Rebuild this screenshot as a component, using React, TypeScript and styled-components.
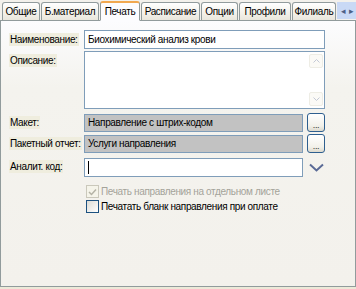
import React from 'react';
import styled, { createGlobalStyle } from 'styled-components';

const GlobalStyle = createGlobalStyle`
  body {
    margin: 0;
    font-family: 'Liberation Sans', Arial, sans-serif;
    font-size: 10px;
    letter-spacing: -0.35px;
    color: #000;
  }
`;

const Frame = styled.div`
  width: 356px;
  height: 289px;
  background: #ece9d8;
  display: flex;
  flex-direction: column;
  overflow: hidden;
`;

const TabStrip = styled.div`
  height: 20px;
  display: flex;
  align-items: flex-end;
  padding-left: 2px;
  background: #f3f1ec;
  position: relative;
  z-index: 1;
`;

const Tab = styled.div<{ $active?: boolean; $w: number }>`
  flex: none;
  width: ${({ $w }) => $w}px;
  height: ${({ $active }) => ($active ? '20px' : '18px')};
  box-sizing: border-box;
  display: flex;
  align-items: center;
  justify-content: center;
  white-space: nowrap;
  overflow: hidden;
  border: 1px solid #919b9c;
  border-bottom: ${({ $active }) => ($active ? '1px solid #fcfcfe' : 'none')};
  border-top: ${({ $active }) => ($active ? '2px solid #f1a84f' : '1px solid #919b9c')};
  border-radius: 3px 3px 0 0;
  background: ${({ $active }) =>
    $active ? '#fcfcfe' : 'linear-gradient(#ffffff, #f3f1ea 60%, #e9e6dc)'};
  margin-right: 1px;
  margin-bottom: ${({ $active }) => ($active ? '-1px' : '0')};
`;

const TabScroller = styled.div`
  margin-left: auto;
  flex: none;
  width: 20px;
  height: 17px;
  margin-bottom: 1px;
  background: #c9d9f5;
  display: flex;
  align-items: center;
  justify-content: space-evenly;
  color: #4d6185;
  font-size: 9px;
`;

const Panel = styled.div`
  flex: none;
  height: 267px;
  box-sizing: border-box;
  border: 1px solid #919b9c;
  background: linear-gradient(#fcfcfe, #f4f3ee 25%, #f3f1ec);
  padding: 9px 13px 0 8px;
`;

const Form = styled.div`
  display: grid;
  grid-template-columns: 75px 219px 22px;
  row-gap: 2px;
  align-items: center;
`;

const Label = styled.div<{ $top?: boolean }>`
  align-self: ${({ $top }) => ($top ? 'start' : 'center')};
  margin-top: ${({ $top }) => ($top ? '3px' : '0')};
  justify-self: start;
  background: #efedde;
  padding: 0 1px;
  line-height: 13px;
  white-space: nowrap;
`;

const TextBox = styled.div<{ $wide?: boolean; $gray?: boolean; $gapTop?: boolean }>`
  grid-column: ${({ $wide }) => ($wide ? '2 / 4' : '2 / 3')};
  height: ${({ $gray }) => ($gray ? '18px' : '19px')};
  margin-top: ${({ $gapTop }) => ($gapTop ? '3px' : '0')};
  box-sizing: border-box;
  border: 1px solid #7f9db9;
  background: ${({ $gray }) => ($gray ? '#c2c2c2' : '#fff')};
  padding: 0 3px;
  display: flex;
  align-items: center;
  white-space: nowrap;
  overflow: hidden;
`;

const MemoBox = styled.div`
  grid-column: 2 / 4;
  height: 58px;
  box-sizing: border-box;
  border: 1px solid #7f9db9;
  background: #fff;
  display: flex;
  justify-content: flex-end;
  margin-bottom: 2px;
`;

const ScrollBar = styled.div`
  width: 14px;
  display: flex;
  flex-direction: column;
  justify-content: space-between;
  padding: 2px 1px 2px 0;
`;

const ScrollButton = styled.div`
  height: 12px;
  border: 1px solid #eeede5;
  border-radius: 2px;
  background: #fbfaf6;
  display: flex;
  align-items: center;
  justify-content: center;
`;

const DotsButton = styled.div`
  justify-self: end;
  width: 16px;
  height: 17px;
  border: 1px solid #2e5f8f;
  border-radius: 3px;
  background: linear-gradient(#ffffff, #f2f1ea 70%, #dcd9cd);
  display: flex;
  align-items: flex-end;
  justify-content: center;
  font-size: 9px;
  line-height: 12px;
  color: #333;
`;

const Caret = styled.span`
  width: 1px;
  height: 13px;
  background: #000;
`;

const DropIcon = styled.div`
  justify-self: end;
  width: 18px;
  margin-top: 3px;
  display: flex;
  justify-content: center;
`;

const Checks = styled.div`
  display: flex;
  flex-direction: column;
  gap: 2px;
  padding: 8px 0 0 77px;
`;

const CheckRow = styled.label<{ $disabled?: boolean }>`
  display: flex;
  align-items: center;
  gap: 2px;
  color: ${({ $disabled }) => ($disabled ? '#a4a39a' : '#000')};
  white-space: nowrap;
`;

const Box = styled.span<{ $disabled?: boolean }>`
  width: 11px;
  height: 11px;
  border: 1px solid ${({ $disabled }) => ($disabled ? '#cac8bb' : '#1c5180')};
  background: ${({ $disabled }) => ($disabled ? '#f5f4ea' : 'linear-gradient(135deg, #dcdbd5, #fff)')};
  display: flex;
  align-items: center;
  justify-content: center;
`;

const Arrow = ({ up }: { up?: boolean }) => (
  <svg width="7" height="4" viewBox="0 0 7 4">
    <polyline
      points={up ? '0.5,3.5 3.5,0.5 6.5,3.5' : '0.5,0.5 3.5,3.5 6.5,0.5'}
      fill="none"
      stroke="#c3c8d6"
      strokeWidth="1"
    />
  </svg>
);

const tabs: [string, number][] = [
  ['Общие', 38],
  ['Б.материал', 58],
  ['Печать', 40],
  ['Расписание', 59],
  ['Опции', 37],
  ['Профили', 52],
  ['Филиаль', 44],
];

export default function App() {
  return (
    <>
      <GlobalStyle />
      <Frame>
        <TabStrip>
          {tabs.map(([t, w]) => (
            <Tab key={t} $w={w} $active={t === 'Печать'}>
              {t}
            </Tab>
          ))}
          <TabScroller>
            <span>◂</span>
            <span>▸</span>
          </TabScroller>
        </TabStrip>
        <Panel>
          <Form>
            <Label>Наименование:</Label>
            <TextBox $wide>Биохимический анализ крови</TextBox>

            <Label $top>Описание:</Label>
            <MemoBox>
              <ScrollBar>
                <ScrollButton>
                  <Arrow up />
                </ScrollButton>
                <ScrollButton>
                  <Arrow />
                </ScrollButton>
              </ScrollBar>
            </MemoBox>

            <Label>Макет:</Label>
            <TextBox $gray>Направление с штрих-кодом</TextBox>
            <DotsButton>...</DotsButton>

            <Label>Пакетный отчет:</Label>
            <TextBox $gray>Услуги направления</TextBox>
            <DotsButton>...</DotsButton>

            <Label>Аналит. код:</Label>
            <TextBox $gapTop>
              <Caret />
            </TextBox>
            <DropIcon>
              <svg width="15" height="9" viewBox="0 0 15 9">
                <polyline points="1,1.5 7.5,7.5 14,1.5" fill="none" stroke="#5a6a96" strokeWidth="2" />
              </svg>
            </DropIcon>
          </Form>
          <Checks>
            <CheckRow $disabled>
              <Box $disabled>
                <svg width="9" height="8" viewBox="0 0 9 8">
                  <polyline points="1,4 3.5,6.5 8,1.5" fill="none" stroke="#b5b3a6" strokeWidth="1.5" />
                </svg>
              </Box>
              Печать направления на отдельном листе
            </CheckRow>
            <CheckRow>
              <Box />
              Печатать бланк направления при оплате
            </CheckRow>
          </Checks>
        </Panel>
      </Frame>
    </>
  );
}
